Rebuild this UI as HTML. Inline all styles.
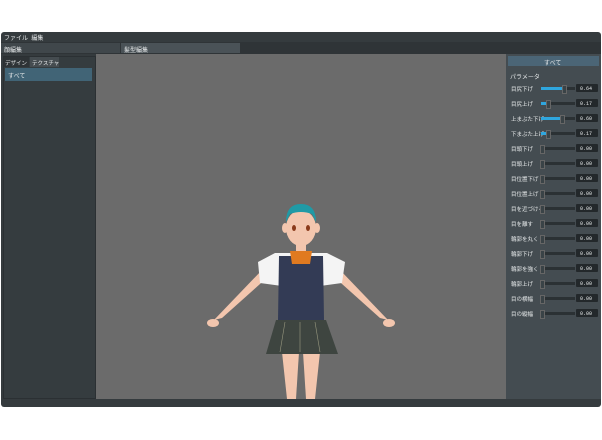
<!DOCTYPE html>
<html><head><meta charset="utf-8"><style>
body{margin:0;width:602px;height:440px;background:#fff;position:relative;overflow:hidden;font-family:"Liberation Sans","Noto Sans CJK JP",sans-serif;color:#e6e9ea}
.a{position:absolute}
.t{font-size:6px;white-space:nowrap}
</style></head><body>
<div class="a" style="left:1px;top:32px;width:600px;height:375px;background:#353b3e;border-radius:3px"></div>
<div class="a t" style="left:4px;top:33px">ファイル&nbsp;&nbsp;編集</div>
<div class="a" style="left:1px;top:42px;width:600px;height:12px;background:#2f3437"></div>
<div class="a" style="left:1px;top:43px;width:119px;height:10px;background:#40474b"></div>
<div class="a t" style="left:4px;top:45px">顔編集</div>
<div class="a" style="left:121px;top:43px;width:119px;height:10px;background:#4a5257"></div>
<div class="a t" style="left:124px;top:45px">髪型編集</div>
<!-- left panel -->
<div class="a" style="left:3px;top:56px;width:91px;height:341px;background:#353c3f;border:1px solid #2b3033"></div>
<div class="a" style="left:4px;top:57px;width:25px;height:10px;background:#2e3336"></div>
<div class="a t" style="left:5px;top:59px;font-size:5.5px">デザイン</div>
<div class="a" style="left:30px;top:57px;width:29px;height:10px;background:#454c50"></div>
<div class="a t" style="left:32px;top:59px;font-size:5.5px">テクスチャ</div>
<div class="a" style="left:5px;top:68px;width:87px;height:13px;background:#416476"></div>
<div class="a t" style="left:8px;top:71px">すべて</div>
<!-- viewport -->
<div class="a" style="left:96px;top:54px;width:410px;height:345px;background:#6b6b6b"></div>
<svg class="a" style="left:96px;top:54px" width="410" height="345" viewBox="96 54 410 345">
<g fill="#f3c6ae">
<polygon points="262,270 270,275 222,318 214,320"/>
<polygon points="340,270 332,275 380,318 388,320"/>
<ellipse cx="213" cy="323" rx="6" ry="4"/>
<ellipse cx="389" cy="323" rx="6" ry="4"/>
<rect x="296" y="240" width="10" height="14"/>
<polygon points="282,352 299,352 296,399 287,399"/>
<polygon points="303,352 320,352 315,399 306,399"/>
<ellipse cx="301" cy="228" rx="15" ry="18"/>
<ellipse cx="285" cy="228" rx="3" ry="5"/>
<ellipse cx="317" cy="228" rx="3" ry="5"/>
</g>
<path d="M286,222 Q286,204 301,204 Q316,204 316,222 L312,214 Q301,210 290,214 Z" fill="#1f9aa6"/>
<ellipse cx="294" cy="228" rx="2" ry="3" fill="#8a3a1a"/>
<ellipse cx="308" cy="228" rx="2" ry="3" fill="#8a3a1a"/>
<polygon points="275,253 327,253 345,262 342,283 320,286 282,286 260,283 258,262" fill="#f4f4f4"/>
<polygon points="279,256 323,256 324,320 278,320" fill="#333b55"/>
<polygon points="290,251 312,251 310,264 292,264" fill="#e07a20"/>
<polygon points="276,320 326,320 338,354 266,354" fill="#3e4540"/>
<g stroke="#9a9a80" stroke-width="0.6"><line x1="285" y1="322" x2="280" y2="352"/><line x1="300" y1="322" x2="300" y2="352"/><line x1="315" y1="322" x2="320" y2="352"/></g>
</svg>
<!-- right panel -->
<div class="a" style="left:506px;top:54px;width:95px;height:345px;background:#444c51"></div>
<div class="a" style="left:508px;top:56px;width:91px;height:10px;background:#4b6576"></div>
<div class="a t" style="left:544px;top:58px">すべて</div>
<div class="a t" style="left:510px;top:72px">パラメータ</div>
<div id="rows"></div>
<script>
var L=["目尻下げ","目尻上げ","上まぶた下げ","下まぶた上げ","目頭下げ","目頭上げ","目位置下げ","目位置上げ","目を近づける","目を離す","輪郭を丸く","輪郭下げ","輪郭を強く","輪郭上げ","目の横幅","目の縦幅"];
var V=[0.64,0.17,0.60,0.17];var h="";
for(var i=0;i<16;i++){var y=85+i*15;var v=V[i]||0;var w=Math.round(34*v);
h+='<div class="a t" style="left:511px;top:'+y+'px;font-size:5.5px">'+L[i]+'</div>';
h+='<div class="a" style="left:541px;top:'+(y+1.5)+'px;width:34px;height:3px;background:#2b3134"></div>';
if(w)h+='<div class="a" style="left:541px;top:'+(y+1.5)+'px;width:'+w+'px;height:3px;background:#2fa6de"></div>';
h+='<div class="a" style="left:'+(540+w)+'px;top:'+y+'px;width:3px;height:7px;background:#3a4347;border:0.5px solid #666"></div>';
h+='<div class="a" style="left:576px;top:'+(y-1)+'px;width:22px;height:8px;background:#23282b;border-radius:1px"></div>';
h+='<div class="a t" style="left:580px;top:'+(y+0.5)+'px;font-size:5px;font-family:Liberation Mono,monospace">'+v.toFixed(2)+'</div>';}
document.getElementById("rows").innerHTML=h;
</script>
</body></html>
